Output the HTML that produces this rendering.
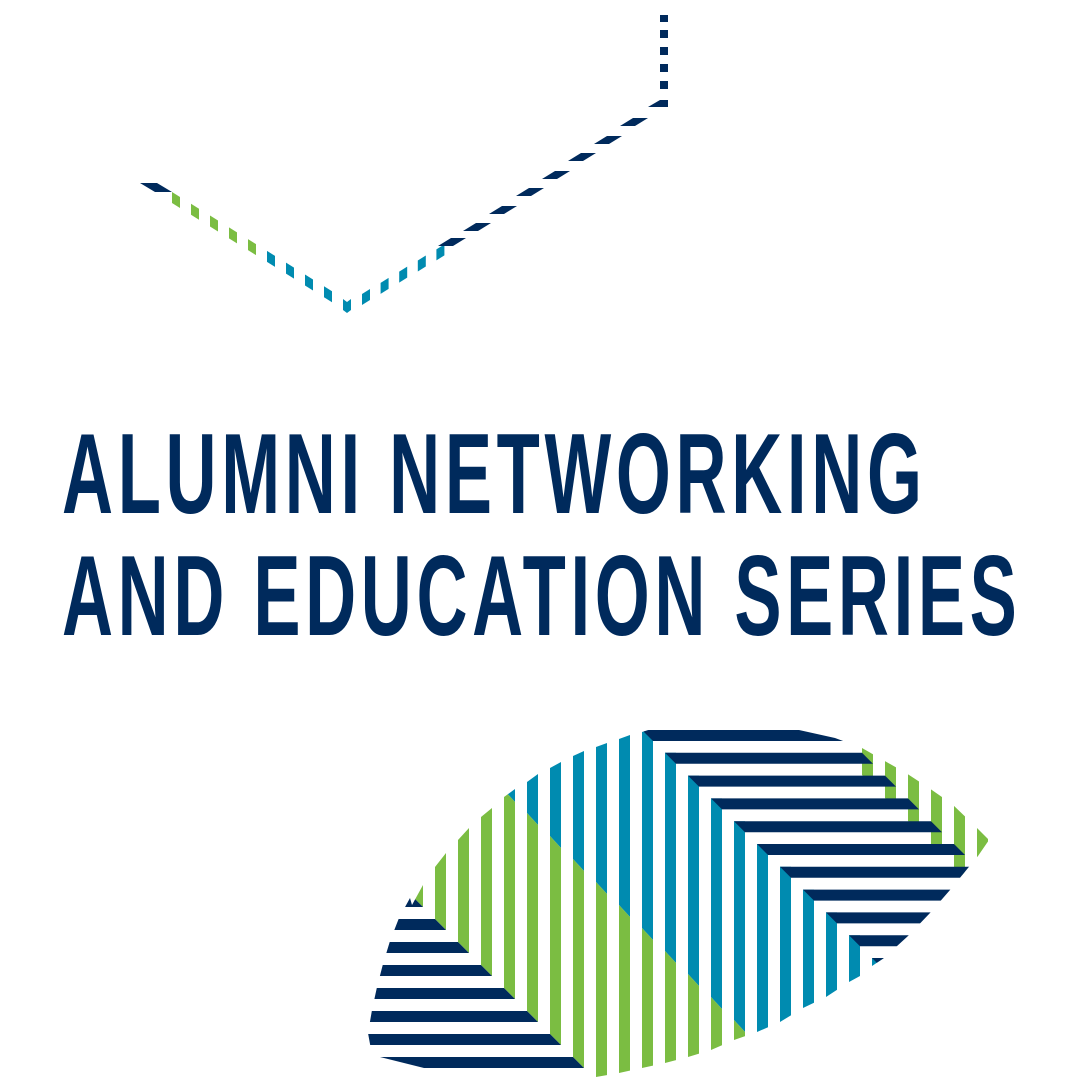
<!DOCTYPE html>
<html><head><meta charset="utf-8"><style>
html,body{margin:0;padding:0;background:#fff;}
svg{display:block}
</style></head><body>
<svg id="s" width="1080" height="1080" viewBox="0 0 1080 1080" xmlns="http://www.w3.org/2000/svg">
<defs>
<clipPath id="leaf">
<path d="M655,728 L790,728 L835,738 L862,748 L883,760 L906,773 L929,788 L952,804 L975,826 L989,840 L978,856 L968,868 L950,890 L930,913 L908,936 L884,958 L872,966 L860,976 L849,982 L826,997 L803,1008 L780,1022 L757,1032 L734,1040 L711,1050 L688,1057 L665,1063 L642,1068 L619,1073 L596,1077 L575,1080 L560,1095 L480,1095 L440,1072 L372,1055 L368,1033 L372,1010 L377,987 L383,964 L390,941 L399,918 L410,898 L412,905 L423,885 L435,867 L446,853 L458,840 L469,828 L481,817 L492,808 L504,797 L515,789 L527,782 L538,774 L550,768 L561,762 L573,756 L584,751 L596,747 L607,743 L619,739 L630,735 L642,732 Z"/>
</clipPath>
</defs>
<g id="topg"></g>
<g transform="scale(0.62,1)">
<text x="100" y="513" font-family="Liberation Sans, Arial, sans-serif" font-weight="bold" font-size="114" fill="#002a5c" textLength="1387" lengthAdjust="spacing">ALUMNI NETWORKING</text>
<text x="100" y="635" font-family="Liberation Sans, Arial, sans-serif" font-weight="bold" font-size="114" fill="#002a5c" textLength="1540" lengthAdjust="spacing">AND EDUCATION SERIES</text>
</g>
<g id="leafg" clip-path="url(#leaf)"></g>
</svg>
<script>
(function(){
var NS="http://www.w3.org/2000/svg";
var NAVY="#002a5c",TEAL="#008bb0",GREEN="#7bbd42";
function poly(g,pts,c){var p=document.createElementNS(NS,"polygon");p.setAttribute("points",pts.map(function(a){return a[0]+","+a[1]}).join(" "));p.setAttribute("fill",c);g.appendChild(p);}
var T=document.getElementById("topg");
poly(T,[[140,183],[157,183],[172,192],[155,192]],NAVY);
for(var i=0;i<9;i++){var cx=176+19*i,cy=200+(cx-176)*0.62;var c=i<5?GREEN:TEAL;
poly(T,[[cx-4,cy-8],[cx+4,cy-3],[cx+4,cy+8],[cx-4,cy+3]],c);}
poly(T,[[343,299],[347,302],[351,299],[351,310],[347,313],[343,310]],TEAL);
for(var i=0;i<5;i++){var cx=366+18.6*i,cy=297-(cx-366)*0.6;
poly(T,[[cx-4,cy-3],[cx+4,cy-8],[cx+4,cy+3],[cx-4,cy+8]],TEAL);}
var nd=[[452,242],[477,227],[503,210],[530,192],[556,175],[582,157],[608,140],[634,122]];
nd.forEach(function(d){var x=d[0],y=d[1];poly(T,[[x-14,y+4],[x+1,y+4],[x+14,y-4],[x-1,y-4]],NAVY);});
poly(T,[[648,107],[660,100],[668,100],[668,107]],NAVY);
[[15,22],[30,38],[47,55],[64,72],[81,89]].forEach(function(r){poly(T,[[660,r[0]],[668,r[0]],[668,r[1]],[660,r[1]]],NAVY);});

var G=document.getElementById("leafg");
for(var k=0;k<=20;k++){
 var bx=412+23*k,w=11;
 var ty=k>=10?730+22.8*(k-10):700;
 var by=k<=7?907+23*k:1100;
 var yt=bx+286;
 if(yt>ty){poly(G,[[bx,ty],[bx+w,ty],[bx+w,Math.min(yt+12,by)],[bx,Math.min(yt,by)]],TEAL);}
 if(yt<by){
   var g1=Math.max(yt,ty),g2=Math.max(yt+12,ty);
   poly(G,[[bx,g1],[bx+w,g2],[bx+w,by],[bx,k<=7?by-11:by]],GREEN);
 }
}
for(var j=0;j<=8;j++){
 var y=896+23*j,xr=423+23*j;
 if(j==8){poly(G,[[300,y+2],[xr-11,y+2],[xr,y+13],[300,y+13]],NAVY);continue;}
 poly(G,[[300,y],[xr-11,y],[xr,y+11],[300,y+11]],NAVY);
}
for(var n=0;n<=5;n++){
 var xg=862+23*n,yb=752+23*(n+1);
 if(n==5){poly(G,[[xg,700],[xg+11,700],[xg+11,900],[xg,900]],GREEN);continue;}
 poly(G,[[xg,700],[xg+11,700],[xg+11,yb+11],[xg,yb]],GREEN);
}
for(var m=0;m<=10;m++){
 var y=730+22.8*m,xl=642+23*m;
 var xr=(m>=1&&m<=5)?862+23*(m-1):1100;
 if(xr<1100)poly(G,[[xl,y],[xr,y],[xr+11,y+11],[xl+11,y+11]],NAVY);
 else poly(G,[[xl,y],[xr,y],[xr,y+11],[xl+11,y+11]],NAVY);
}
})();
</script>
</body></html>
